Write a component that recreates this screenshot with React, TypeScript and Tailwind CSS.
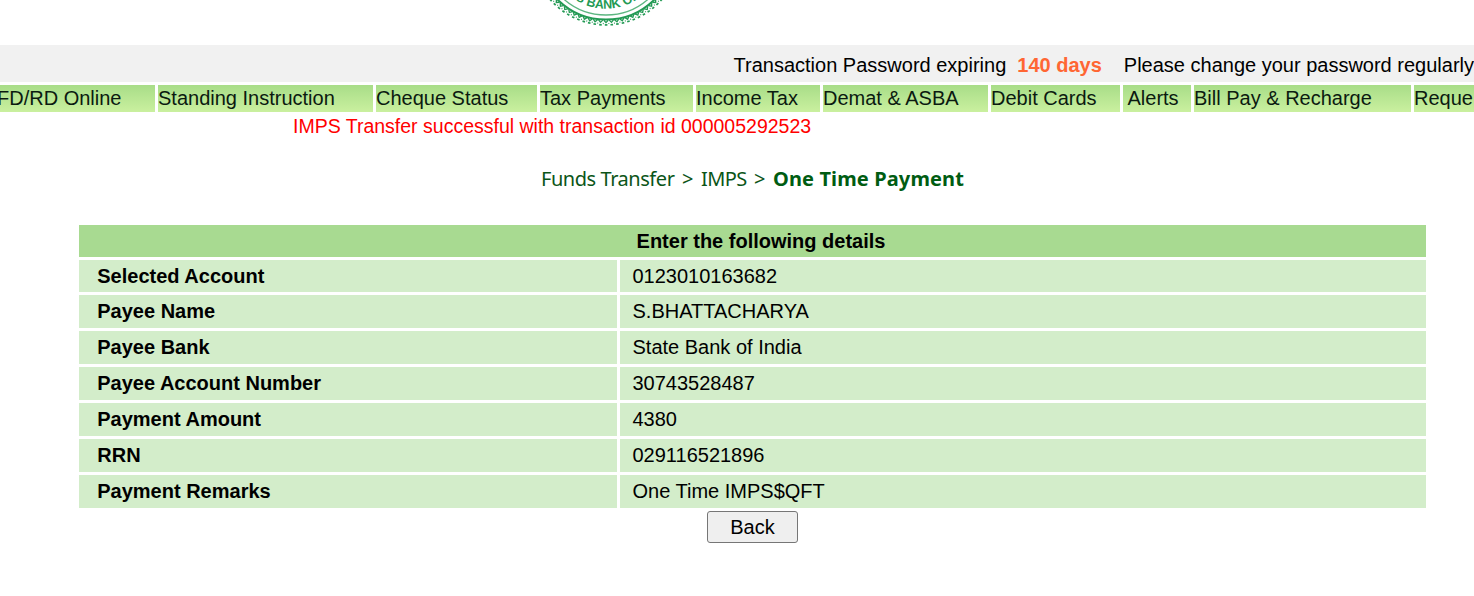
const menu = [
  { label: "FD/RD Online", cls: "w-[155px] -indent-[3px]" },
  { label: "Standing Instruction", cls: "w-[215px]" },
  { label: "Cheque Status", cls: "w-[161px]" },
  { label: "Tax Payments", cls: "w-[153px]" },
  { label: "Income Tax", cls: "w-[124px]" },
  { label: "Demat & ASBA", cls: "w-[165px]" },
  { label: "Debit Cards", cls: "w-[129px]" },
  { label: "Alerts", cls: "w-[68px] indent-[4.5px]" },
  { label: "Bill Pay & Recharge", cls: "w-[217px]" },
  { label: "Reque", cls: "w-[120px]" },
];

const details = [
  { label: "Selected Account", value: "0123010163682", h: "h-8" },
  { label: "Payee Name", value: "S.BHATTACHARYA", h: "h-[33px]" },
  { label: "Payee Bank", value: "State Bank of India", h: "h-[33px]" },
  { label: "Payee Account Number", value: "30743528487", h: "h-[33px]" },
  { label: "Payment Amount", value: "4380", h: "h-[33px]" },
  { label: "RRN", value: "029116521896", h: "h-[33px]" },
  { label: "Payment Remarks", value: "One Time IMPS$QFT", h: "h-[33px]" },
];

// Angles, in degrees, of the notches along the lower rim of the seal
const notches = Array.from({ length: 25 }, (_, i) => (i - 12) * 4.4);

function Seal() {
  return (
    <svg className="ml-[536px] block h-[45px] w-[140px]" viewBox="536 0 140 45" fill="none">
      {notches.map((a) => (
        <g key={a} transform={`rotate(${a} 606 -49)`} stroke="#239a54">
          <path d="M603.9 20.2 L606 22.6 L608.1 20.2" strokeWidth="1.3" />
          <path d="M604.8 24.9 H607.4" strokeWidth="1.7" />
          <path d="M608.4 23.5 H609.3" strokeWidth="1.2" />
        </g>
      ))}
      <circle cx="606" cy="-49" r="68.6" stroke="#239a54" strokeWidth="2" />
      <circle cx="606" cy="-49" r="64" stroke="#5cb680" strokeWidth="1.3" />
      <path id="seal-arc" d="M548.3 -49 A57.7 57.7 0 0 0 663.7 -49" />
      <text fill="#239a54" fontFamily="Liberation Sans, sans-serif" fontWeight="700" fontSize="12.5">
        <textPath href="#seal-arc" startOffset="51%" textAnchor="middle">S BANK OF</textPath>
      </text>
    </svg>
  );
}

export default function App() {
  return (
    <div className="h-[596px] w-[1474px] overflow-hidden bg-white font-['Liberation_Sans',Arial,sans-serif] text-[20px] leading-[24px] text-black">
      <Seal />
      <div className="flex h-[37px] items-center justify-end bg-[#f1f1f1] pt-[3px] whitespace-pre">
        <span>Transaction Password expiring</span>
        <span className="ml-[11px] font-bold text-[#ff6633]">140 days</span>
        <span className="ml-[22px]">Please change your password regularly</span>
      </div>
      <nav className="mt-[3px] flex h-[27px] gap-[3px]">
        {menu.map((m) => (
          <a key={m.label} className={`block shrink-0 bg-linear-to-b from-[#a8dd88] to-[#caf09f] pt-px whitespace-nowrap text-[#0b1a10] ${m.cls}`}>
            {m.label}
          </a>
        ))}
      </nav>
      <p className="mt-[2px] ml-[293px] text-[19.5px] whitespace-nowrap text-[#ff0000]">IMPS Transfer successful with transaction id 000005292523</p>
      <div className="mt-[29px] ml-[541px] flex whitespace-pre font-['Noto_Sans',sans-serif] text-[#0b5518]">
        <span className="w-[141px] tracking-[-0.45px]">Funds Transfer</span>
        <span className="w-[19px]">&gt;</span>
        <span className="w-[53px] tracking-[-0.6px]">IMPS</span>
        <span className="w-[19px]">&gt;</span>
        <b className="tracking-[0.12px] text-[#005c12]">One Time Payment</b>
      </div>
      <main className="mt-[34px] ml-[79px] flex w-[1347px] flex-col gap-[3px]">
        <h1 className="flex h-8 items-center justify-center bg-[#a8da91] pl-[17px] font-bold">Enter the following details</h1>
        {details.map((d) => (
          <div key={d.label} className={`flex gap-[3px] ${d.h}`}>
            <div className="w-[538px] bg-[#d3edca] pt-1 pl-[18.25px] font-bold">{d.label}</div>
            <div className="flex-1 bg-[#d3edca] pt-1 pl-[12.5px]">{d.value}</div>
          </div>
        ))}
        <button className="h-8 w-[91px] self-center rounded-[3px] border border-[#767676] bg-[#efefef]">Back</button>
      </main>
    </div>
  );
}
